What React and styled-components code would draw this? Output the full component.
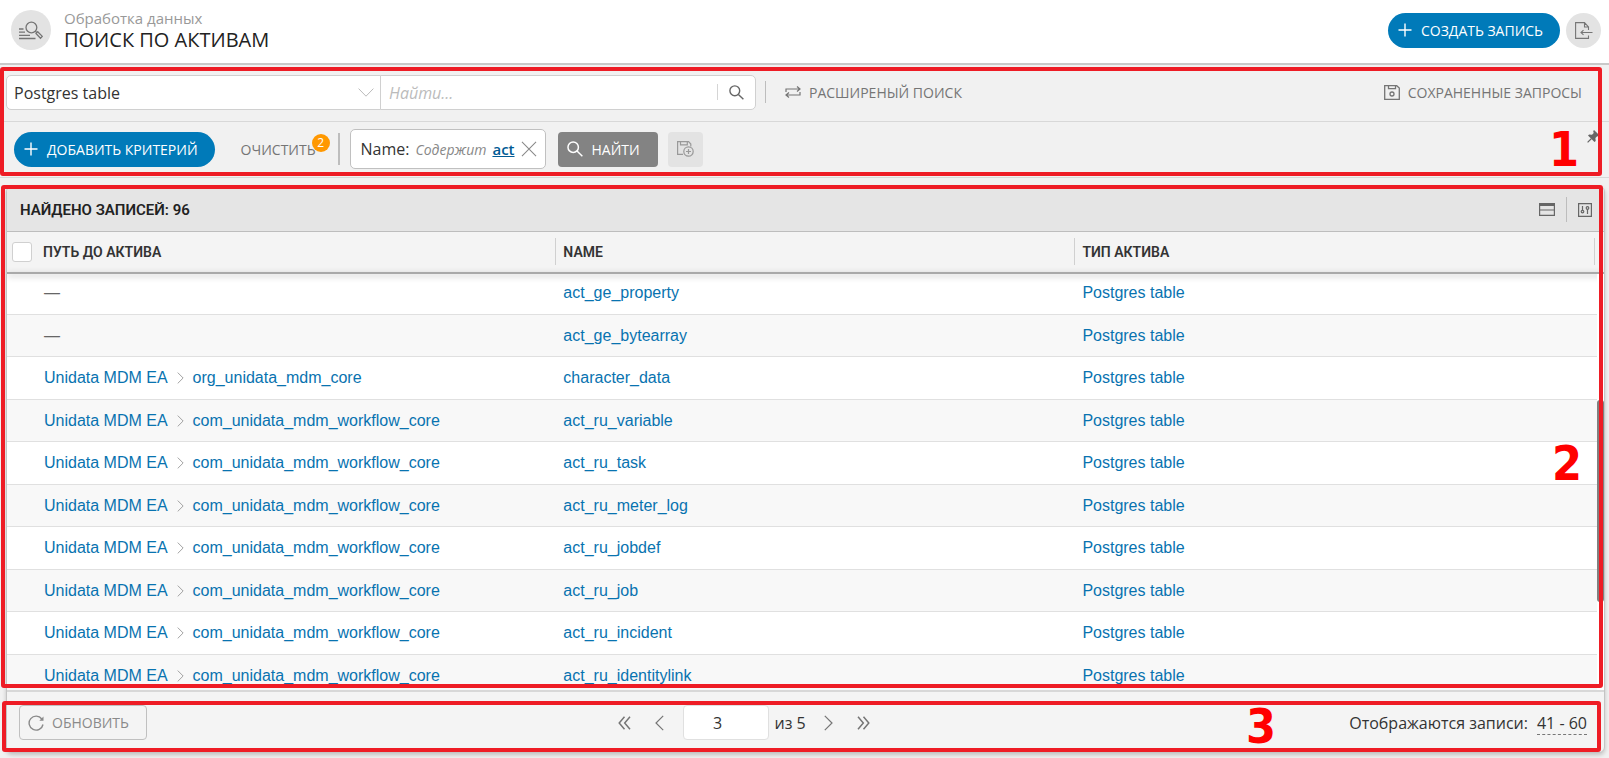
import React from 'react';
import styled, { createGlobalStyle, css } from 'styled-components';

const Global = createGlobalStyle`
  *, *::before, *::after { box-sizing: border-box; }
  body { margin: 0; background: #f1f1f1; }
  button, input, select { font: inherit; color: inherit; margin: 0; }
  button { cursor: pointer; padding: 0; border: 0; background: none; }
`;

const blue = '#007ab9';
const linkBlue = '#0873b0';
const red = '#ee1c25';
const headingFont = "Roboto, 'Open Sans', sans-serif";

const Page = styled.div`
  display: flex;
  flex-direction: column;
  height: 100vh;
  min-height: 480px;
  font-family: 'Open Sans', sans-serif;
  font-size: 16px;
  color: #333;
  overflow: hidden;
`;

const Icon = styled.svg.attrs({ 'aria-hidden': true, fill: 'none', stroke: 'currentColor' })`
  display: block;
  flex: none;
  width: ${(p) => p.$w || 16}px;
  height: ${(p) => p.$h || p.$w || 16}px;
`;

/* ---- page header ---- */
const Header = styled.header`
  flex: none;
  display: flex;
  align-items: center;
  height: 65px;
  padding: 0 8px 3px 11px;
  background: #fff;
  border-bottom: 2px solid #c9c9c9;
`;
const Round = styled.span`
  display: grid;
  place-items: center;
  flex: none;
  width: ${(p) => p.$size}px;
  height: ${(p) => p.$size}px;
  border-radius: 50%;
  background: #e3e3e3;
  color: #757575;
`;
const Titles = styled.div`
  flex: 1;
  padding-left: 13px;
`;
const Section = styled.div`
  font-size: 15px;
  line-height: 18px;
  color: #999;
`;
const Title = styled.h1`
  margin: 0;
  font-size: 20px;
  line-height: 25px;
  font-weight: 400;
  color: #222;
`;
const PillButton = styled.button`
  display: flex;
  align-items: center;
  flex: none;
  gap: 9px;
  height: 35px;
  padding: 0 17px 0 10px;
  border-radius: 18px;
  background: ${blue};
  color: #fff;
  font-size: 14px;
`;
const HeaderActions = styled.div`
  display: flex;
  gap: 6px;
`;

/* ---- search filters ---- */
const Filters = styled.section`
  position: relative;
  flex: none;
  background: #f1f1f1;
`;
const FilterRow = styled.div`
  display: flex;
  align-items: center;
  height: ${(p) => p.$h}px;
  padding: ${(p) => p.$pad};
  border-bottom: 1px solid #d8d8d8;
`;
const SelectBox = styled.div`
  display: flex;
  align-items: center;
  position: relative;
  flex: 0 1 375px;
  height: 35px;
  background: #fff;
  border: 1px solid #d0d0d0;
  border-radius: 5px 0 0 5px;
  color: #333;
  svg { position: absolute; right: 6px; pointer-events: none; color: #bbb; }
`;
const Select = styled.select`
  appearance: none;
  width: 100%;
  height: 100%;
  padding: 2px 30px 0 7px;
  border: 0;
  background: none;
`;
const SearchBox = styled.div`
  display: flex;
  align-items: center;
  flex: 0 1 376px;
  height: 35px;
  margin-left: -1px;
  background: #fff;
  border: 1px solid #d0d0d0;
  border-radius: 0 5px 5px 0;
`;
const SearchInput = styled.input`
  flex: 1;
  min-width: 0;
  height: 100%;
  padding: 1px 8px 0;
  border: 0;
  background: none;
  &::placeholder { color: #bbb; font-style: italic; opacity: 1; }
`;
const SearchButton = styled.button`
  display: grid;
  place-items: center;
  width: 38px;
  height: 16px;
  border-left: 1px solid #d5d5d5;
  color: #666;
`;
const Separator = styled.span`
  flex: none;
  width: ${(p) => p.$w || 1}px;
  height: ${(p) => p.$h}px;
  margin: ${(p) => p.$margin || 0};
  background: #bdbdbd;
`;
const FlatButton = styled.button`
  display: flex;
  align-items: center;
  gap: 8px;
  flex: none;
  font-size: 14px;
  color: #757575;
`;
const Spacer = styled.span`
  flex: 1;
`;
const ClearButton = styled(FlatButton)`
  position: relative;
  margin: 0 22px 0 26px;
`;
const Badge = styled.span`
  position: absolute;
  left: 71px;
  top: -6px;
  width: 18px;
  height: 18px;
  border-radius: 50%;
  background: #ff9800;
  color: #fff;
  font-size: 12px;
  line-height: 18px;
  text-align: center;
`;
const Chip = styled.div`
  display: flex;
  align-items: center;
  gap: 6px;
  height: 40px;
  margin: 0 12px 0 10px;
  padding: 0 8px 0 10px;
  background: #fff;
  border: 1px solid #c0c0c0;
  border-radius: 5px;
  color: #333;
  i { font-size: 14px; color: #888; }
  a { font-size: 15px; font-weight: 600; color: #005b94; }
  button { color: #888; }
`;
const FindButton = styled.button`
  display: flex;
  align-items: center;
  gap: 9px;
  height: 35px;
  margin-right: 10px;
  padding: 0 18px 0 9px;
  border-radius: 4px;
  background: #838383;
  color: #fff;
  font-size: 14px;
`;
const SaveButton = styled.button`
  display: grid;
  place-items: center;
  width: 35px;
  height: 35px;
  border-radius: 4px;
  background: #e3e3e3;
  color: #999;
`;
const PinButton = styled.button`
  align-self: flex-start;
  margin-top: 8px;
  color: #666;
`;

/* ---- results ---- */
const Results = styled.main`
  flex: 1;
  min-height: 0;
  display: flex;
  flex-direction: column;
  margin: 8px 4px 5px 6px;
  border: 1px solid #c4c4c4;
  border-radius: 6px;
  box-shadow: 0 2px 4px rgba(0, 0, 0, 0.2);
  background: #f4f4f4;
`;
const Listing = styled.section`
  position: relative;
  flex: 1;
  min-height: 0;
  display: flex;
  flex-direction: column;
`;
const ResultBar = styled.div`
  display: flex;
  align-items: center;
  flex: none;
  height: 45px;
  padding: 1px 12px 0 13px;
  background: #e5e5e5;
  border-bottom: 1px solid #bdbdbd;
  border-radius: 5px 5px 0 0;
  color: #666;
`;
const Count = styled.h2`
  flex: 1;
  margin: 0;
  font-family: ${headingFont};
  font-size: 15px;
  line-height: 20px;
  font-weight: 600;
  color: #222;
`;
const BarTools = styled.div`
  display: flex;
  align-items: center;
  gap: 11px;
`;
const Viewport = styled.div`
  position: relative;
  flex: 1;
  min-height: 0;
  overflow: hidden;
  background: #fff;
  border-bottom: 2px solid #d8d8d8;
`;
const Table = styled.table`
  width: 100%;
  table-layout: fixed;
  border-collapse: separate;
  border-spacing: 0;
`;
const Column = styled.col`
  width: ${(p) => p.$w};
`;
const HeadCell = styled.th`
  height: 40px;
  padding: 0 ${(p) => (p.$last ? 9 : 0)}px 1px 0;
  background: #f4f4f4;
  text-align: left;
  font-family: ${headingFont};
  font-size: 14px;
  font-weight: 600;
  color: #333;
`;
const HeadInner = styled.div`
  display: flex;
  align-items: center;
  gap: 11px;
  height: 27px;
  padding-left: ${(p) => (p.$first ? 5 : 7)}px;
  border-right: 1px solid #d0d0d0;
`;
const Check = styled.input`
  appearance: none;
  width: 20px;
  height: 20px;
  margin: 0;
  background: #fff;
  border: 1px solid #d0d0d0;
  border-radius: 3px;
`;
const HeadShadow = styled.div`
  position: absolute;
  top: 40px;
  left: 0;
  right: 0;
  height: 2px;
  background: #a9a9a9;
  box-shadow: 0 2px 6px rgba(0, 0, 0, 0.3);
`;
const Row = styled.tr`
  height: 43px;
  &:nth-child(even) { height: 42px; background: #f8f8f8; }
`;
const Cell = styled.td`
  padding: 0 0 0 ${(p) => (p.$first ? 37 : 7)}px;
  border-bottom: 1px solid #e0e0e0;
  font-family: 'Liberation Sans', Arial, sans-serif;
  font-size: 16px;
  line-height: 20px;
  white-space: nowrap;
  color: #666;
`;
const Path = styled.div`
  display: flex;
  align-items: center;
  gap: 9px;
  color: #999;
`;
const Link = styled.a`
  color: ${linkBlue};
  text-decoration: none;
`;
const ScrollTrack = styled.div`
  position: absolute;
  top: 42px;
  right: 0;
  bottom: 0;
  width: 7px;
  background: #fff;
`;
const ScrollThumb = styled.div`
  margin-top: 126px;
  height: 202px;
  border-radius: 3px;
  background: #808080;
`;

/* ---- pager ---- */
const Footer = styled.footer`
  position: relative;
  flex: none;
  display: flex;
  justify-content: space-between;
  align-items: center;
  height: 60px;
  padding: 1px 17px 0 12px;
`;
const RefreshButton = styled.button`
  display: flex;
  align-items: center;
  gap: 8px;
  height: 35px;
  padding: 0 17px 0 8px;
  border: 1px solid #c0c0c0;
  border-radius: 4px;
  font-size: 14px;
  color: #8a8a8a;
`;
const Pager = styled.nav`
  display: flex;
  align-items: center;
  margin-right: 8px;
  color: #757575;
`;
const PageLabel = styled.label`
  display: flex;
  align-items: center;
  gap: 5px;
  margin: 0 18px 0 19px;
  color: #333;
`;
const PageInput = styled.input`
  width: 86px;
  height: 35px;
  padding: 0 18px 0 0;
  border: 1px solid #e0e0e0;
  border-radius: 4px;
  background: #fff;
  text-align: center;
`;
const PageGroup = styled.div`
  display: flex;
  gap: 24px;
`;
const Range = styled.div`
  display: flex;
  gap: 9px;
  padding-top: 2px;
`;
const RangeButton = styled.button`
  border-bottom: 1px dashed #777;
`;

/* ---- numbered callouts ---- */
const Callout = styled.div`
  position: absolute;
  z-index: 2;
  inset: ${(p) => p.$inset};
  border: 4px solid ${red};
  border-radius: 3px;
  pointer-events: none;
`;
const Mark = styled.span`
  position: absolute;
  z-index: 3;
  right: ${(p) => p.$right}px;
  ${(p) => (p.$top !== undefined ? css`top: ${p.$top}px;` : css`bottom: ${p.$bottom}px;`)}
  font-family: 'DejaVu Sans Condensed', 'DejaVu Sans', sans-serif;
  font-size: 48px;
  line-height: 48px;
  font-weight: 700;
  color: #f00;
  pointer-events: none;
`;

const PlusIcon = () => (
  <Icon $w={14} viewBox="0 0 14 14" strokeWidth="1.4"><path d="M7 .5v13M.5 7h13" /></Icon>
);
const SearchIcon = ({ size = 15 }) => (
  <Icon $w={size} viewBox="0 0 15 15" strokeWidth="1.4"><circle cx="5.8" cy="5.8" r="4.9" /><path d="M9.4 9.4l5 4.9" /></Icon>
);
const Chevron = ({ left, w = 9, h = 16 }) => (
  <Icon $w={w} $h={h} viewBox="0 0 9 16" strokeWidth="1.2"><path d={left ? 'M8.2.8L1 8l7.2 7.2' : 'M.8.8L8 8 .8 15.2'} /></Icon>
);
const DoubleChevron = ({ left }) => (
  <Icon $w={13} $h={14} viewBox="0 0 13 14" strokeWidth="1.5">
    <path d={left ? 'M6.5.8L1.2 7l5.3 6.2M12 .8L6.7 7l5.3 6.2' : 'M1 .8L6.3 7 1 13.2M6.5.8L11.8 7l-5.3 6.2'} />
  </Icon>
);

const core = 'com_unidata_mdm_workflow_core';
const rows = [
  [null, 'act_ge_property'],
  [null, 'act_ge_bytearray'],
  ['org_unidata_mdm_core', 'character_data'],
  [core, 'act_ru_variable'],
  [core, 'act_ru_task'],
  [core, 'act_ru_meter_log'],
  [core, 'act_ru_jobdef'],
  [core, 'act_ru_job'],
  [core, 'act_ru_incident'],
  [core, 'act_ru_identitylink'],
];

export default function App() {
  return (
    <Page>
      <Global />
      <Header>
        <Round $size={40}>
          <Icon $w={24} $h={19} viewBox="0 0 24 19" strokeWidth="1.3">
            <circle cx="12.4" cy="6.5" r="5.4" />
            <path d="M16.3 10.2l1.5 1.4M17 12.4l1.7-1.7 4.6 4.7-1.8 1.8zM0 8h4.5M0 11.2h6M0 14.3h11M0 17.5h16.5" />
          </Icon>
        </Round>
        <Titles>
          <Section>Обработка данных</Section>
          <Title>ПОИСК ПО АКТИВАМ</Title>
        </Titles>
        <HeaderActions>
          <PillButton type="button"><PlusIcon />СОЗДАТЬ ЗАПИСЬ</PillButton>
          <Round as="button" type="button" $size={35} aria-label="Импорт">
            <Icon $w={18} $h={17} viewBox="0 0 18 17" strokeWidth="1.1">
              <path d="M13.5 8V5L9.5.6H.6v15.8h12.9v-3M9.5.6V5h4M17.5 10.5H6M8.5 8.2L6 10.5l2.5 2.3" />
            </Icon>
          </Round>
        </HeaderActions>
      </Header>

      <Filters>
        <FilterRow $h={57} $pad="0 27px 2px 6px">
          <SelectBox>
            <Select aria-label="Тип актива" defaultValue="pt"><option value="pt">Postgres table</option></Select>
            <Icon $w={16} $h={9} viewBox="0 0 16 9"><path d="M.6.6L8 8.2 15.4.6" /></Icon>
          </SelectBox>
          <SearchBox>
            <SearchInput type="text" aria-label="Найти" placeholder="Найти..." />
            <SearchButton type="button" aria-label="Искать"><SearchIcon /></SearchButton>
          </SearchBox>
          <Separator $h={22} $margin="0 19px 0 9px" />
          <FlatButton type="button">
            <Icon $w={16} $h={12} viewBox="0 0 16 12" strokeWidth="1.2">
              <path d="M1 6V3h14M12 .5L15 3l-3 2.5M15 6v3H1M4 6.5L1 9l3 2.5" />
            </Icon>
            РАСШИРЕНЫЙ ПОИСК
          </FlatButton>
          <Spacer />
          <FlatButton type="button">
            <Icon $w={16} $h={15} viewBox="0 0 16 15" strokeWidth="1.3">
              <path d="M.7.7h12L15.3 3v11.3H.7zM4.5.7v3h7v-3" /><circle cx="8" cy="9" r="2" />
            </Icon>
            СОХРАНЕННЫЕ ЗАПРОСЫ
          </FlatButton>
        </FilterRow>
        <FilterRow $h={56} $pad="0 9px 1px 14px">
          <PillButton type="button"><PlusIcon />ДОБАВИТЬ КРИТЕРИЙ</PillButton>
          <ClearButton type="button">ОЧИСТИТЬ<Badge>2</Badge></ClearButton>
          <Separator $w={2} $h={32} />
          <Chip>
            <span>Name:</span>
            <i>Содержит</i>
            <a href="#act">act</a>
            <button type="button" aria-label="Удалить критерий">
              <Icon $w={16} viewBox="0 0 17 17" strokeWidth="1.1"><path d="M1 1l15 15M16 1L1 16" /></Icon>
            </button>
          </Chip>
          <FindButton type="button"><SearchIcon size={16} />НАЙТИ</FindButton>
          <SaveButton type="button" aria-label="Сохранить запрос">
            <Icon $w={17} $h={16} viewBox="0 0 17 16" strokeWidth="1.2">
              <path d="M6 13.4H.6V.6h11L13.8 3v2.5M3.5.6v3.2h6.8V.6" />
              <circle cx="11.5" cy="10.5" r="4.7" /><path d="M11.5 8v5M9 10.5h5" />
            </Icon>
          </SaveButton>
          <Spacer />
          <PinButton type="button" aria-label="Закрепить">
            <Icon $w={13} viewBox="0 0 13 13" strokeWidth="1.2">
              <path fill="currentColor" stroke="none" d="M7 0l5.6 5.6-1.2 1-1.2-.3-1.8 1.8.3 3-1.2 1L1 5.600l1.200-1.200 2.800.3L6.700 3l-.5-1.800z" /><path d="M4.500 8.500L.6 12.400" />
            </Icon>
          </PinButton>
        </FilterRow>
        <Callout $inset="2px 7px 2px 0" />
        <Mark $right={30} $top={60}>1</Mark>
      </Filters>

      <Results>
        <Listing>
          <ResultBar>
            <Count>НАЙДЕНО ЗАПИСЕЙ: 96</Count>
            <BarTools>
              <button type="button" aria-label="Вид списка">
                <Icon $w={16} $h={13} viewBox="0 0 16 13" strokeWidth="1.2"><path d="M.6.6h14.8v11.8H.6zM.6 7h14.8M.6 1.5h14.8M.6 2.5h14.8" /></Icon>
              </button>
              <Separator $h={25} />
              <button type="button" aria-label="Настройка столбцов">
                <Icon $w={14} viewBox="0 0 14 14" strokeWidth="1.2">
                  <path d="M.6.6h12.8v12.8H.6zM4.5 3v4M9.5 6.5V11" /><circle cx="4.5" cy="8.6" r="1.3" /><circle cx="9.5" cy="5" r="1.3" />
                </Icon>
              </button>
            </BarTools>
          </ResultBar>
          <Viewport>
            <Table>
              <colgroup><Column $w="34.4%" /><Column $w="32.5%" /><Column /></colgroup>
              <thead>
                <tr>
                  <HeadCell><HeadInner $first><Check type="checkbox" aria-label="Выбрать все" />ПУТЬ ДО АКТИВА</HeadInner></HeadCell>
                  <HeadCell><HeadInner>NAME</HeadInner></HeadCell>
                  <HeadCell $last><HeadInner>ТИП АКТИВА</HeadInner></HeadCell>
                </tr>
              </thead>
              <tbody>
                {rows.map(([schema, name]) => (
                  <Row key={name}>
                    <Cell $first>
                      {schema ? (
                        <Path>
                          <Link href="#unidata">Unidata MDM EA</Link>
                          <Chevron w={7} h={12} />
                          <Link href={`#${schema}`}>{schema}</Link>
                        </Path>
                      ) : '—'}
                    </Cell>
                    <Cell><Link href={`#${name}`}>{name}</Link></Cell>
                    <Cell><Link href="#postgres-table">Postgres table</Link></Cell>
                  </Row>
                ))}
              </tbody>
            </Table>
            <HeadShadow />
            <ScrollTrack><ScrollThumb /></ScrollTrack>
          </Viewport>
          <Callout $inset="-2px 1px 4px -6px" />
          <Mark $right={22} $top={252}>2</Mark>
        </Listing>

        <Footer>
          <RefreshButton type="button">
            <Icon $w={16} viewBox="0 0 16 16" strokeWidth="1.4">
              <path d="M13.8 4A7 7 0 1 0 15 9.5" /><path fill="currentColor" stroke="none" d="M15.5 1.5v4.2h-4.2z" />
            </Icon>
            ОБНОВИТЬ
          </RefreshButton>
          <Pager aria-label="Страницы">
            <PageGroup>
              <button type="button" aria-label="Первая"><DoubleChevron left /></button>
              <button type="button" aria-label="Предыдущая"><Chevron left /></button>
            </PageGroup>
            <PageLabel><PageInput type="text" defaultValue="3" aria-label="Страница" /><span>из 5</span></PageLabel>
            <PageGroup>
              <button type="button" aria-label="Следующая"><Chevron /></button>
              <button type="button" aria-label="Последняя"><DoubleChevron /></button>
            </PageGroup>
          </Pager>
          <Range><span>Отображаются записи:</span><RangeButton type="button">41 - 60</RangeButton></Range>
          <Callout $inset="9px 3px 0 -5px" />
          <Mark $right={328} $bottom={2}>3</Mark>
        </Footer>
      </Results>
    </Page>
  );
}
